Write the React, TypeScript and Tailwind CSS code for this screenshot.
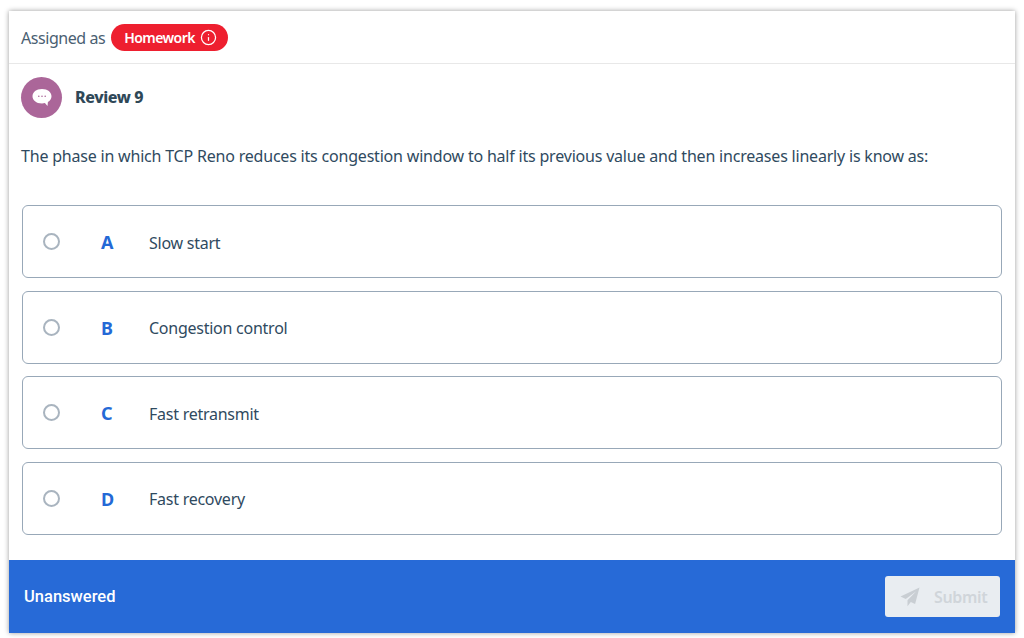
import { Info } from "lucide-react";

const options = [
  { letter: "A", text: "Slow start" },
  { letter: "B", text: "Congestion control" },
  { letter: "C", text: "Fast retransmit" },
  { letter: "D", text: "Fast recovery" },
];

function ChatIcon() {
  return (
    <svg width="24" height="22" viewBox="0 0 24 22">
      <path d="M12 2C6.200 2 2.500 5.200 2.500 9.200c0 4 3.700 7.200 9.500 7.200 1 0 2-.1 2.900-.3l2.600 2.900.4-4c2.300-1.300 3.600-3.400 3.600-5.800C21.500 5.200 17.800 2 12 2z" fill="#fff" />
      <circle cx="8.800" cy="9.300" r="0.800" fill="#ab6699" />
      <circle cx="12" cy="9.300" r="0.800" fill="#ab6699" />
      <circle cx="15.200" cy="9.300" r="0.800" fill="#ab6699" />
    </svg>
  );
}

function PlaneIcon() {
  return (
    <svg width="20" height="20" viewBox="0 0 20 20" fill="#c9ced3">
      <path d="M19.500 .5 .5 9.500l5.200 2.600L16 4.500 7.500 13.200v6l3.300-4.300 4.300 2.200z" />
    </svg>
  );
}

function OptionRow({ letter, text }: { letter: string; text: string }) {
  return (
    <div className="flex h-[73px] items-center rounded-[6px] border border-[#98a8b8] bg-white">
      <span className="ml-[20px] h-[17px] w-[17px] rounded-full border-2 border-[#a9b4bf]" />
      <span className="ml-[41px] mt-[2px] w-[48px] text-[18px] font-bold text-[#2469d6]">{letter}</span>
      <span className="mt-[2px] text-[16px] tracking-[-0.25px] text-[#2f4a60]">{text}</span>
    </div>
  );
}

export default function App() {
  return (
    <div className="h-[638px] w-[1024px] bg-white pl-[9px] pr-[9px] pt-[11px] font-['Noto_Sans',sans-serif] tracking-[-0.35px]">
      <div className="flex h-[622px] w-[1006px] flex-col bg-white shadow-[0_0_5px_rgba(0,0,0,0.4)]">
        <div className="flex h-[53px] items-center gap-[6px] border-b border-[#e8e8e8] px-[12px]">
          <span className="mt-[1px] text-[16px] tracking-[-0.45px] text-[#4a6072]">Assigned as</span>
          <span className="flex h-[27px] items-center gap-[5px] rounded-full bg-[#ee1f2f] pl-[13px] pr-[11px] text-[14px] font-semibold tracking-[-0.55px] text-white">
            Homework
            <Info size={17} strokeWidth={1.75} />
          </span>
        </div>
        <div className="flex items-center gap-[13px] px-[12px] pt-[13px]">
          <span className="flex h-[41px] w-[41px] items-center justify-center rounded-full bg-[#ab6699]">
            <ChatIcon />
          </span>
          <span className="mb-[2px] text-[16px] font-extrabold tracking-[-0.4px] text-[#2f4858]">Review 9</span>
        </div>
        <p className="mt-[26px] px-[12px] text-[16px] leading-[24px] tracking-[-0.2px] text-[#2f4a60]">
          The phase in which TCP Reno reduces its congestion window to half its previous value and then increases linearly is know as:
        </p>
        <div className="mt-[37px] flex flex-col gap-[12.500px] pl-[13px] pr-[13px]">
          {options.map((o) => (
            <OptionRow key={o.letter} letter={o.letter} text={o.text} />
          ))}
        </div>
        <div className="mt-auto flex h-[73px] items-center justify-between bg-[#276ad7] pl-[15px] pr-[15px]">
          <span className="mt-[1px] font-['Roboto',sans-serif] text-[16.500px] font-medium tracking-normal text-white">Unanswered</span>
          <button className="flex h-[41px] w-[115px] items-center gap-[14px] rounded-[3px] bg-[#e9edf1] pl-[15px] text-[16px] font-semibold text-[#d0d5da]">
            <PlaneIcon />
            Submit
          </button>
        </div>
      </div>
    </div>
  );
}
